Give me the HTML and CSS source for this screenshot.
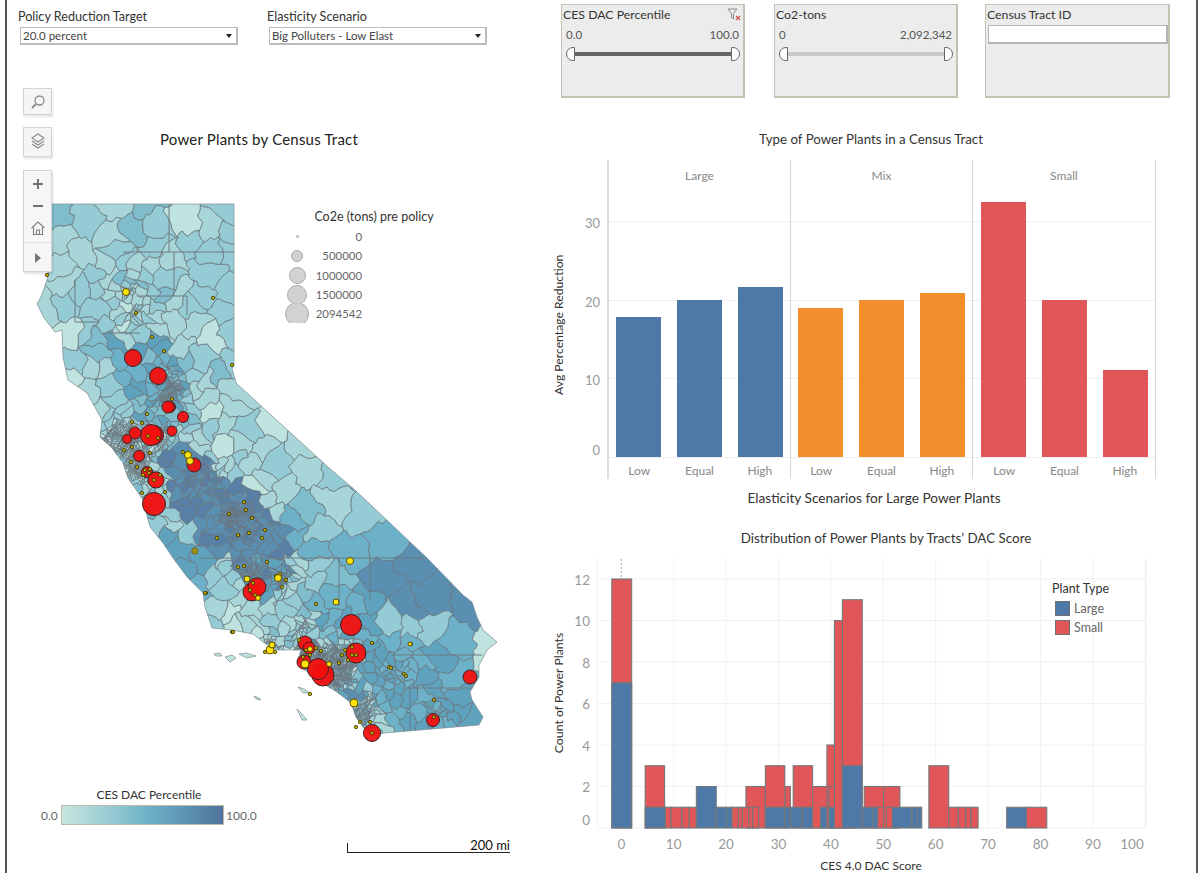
FILE: index.html
```html
<!DOCTYPE html>
<html>
<head>
    <title>Power Plants by Census Tract</title>
    <link rel="stylesheet" href="styles.css">
</head>
<body>
    <div class="dashboard">
        <div class="left-col">
            <div class="filters">
                <div class="filter filter-first">
                    <div class="filter-label">Policy Reduction Target</div>
                    <div class="dropdown"><span>20.0 percent</span><i class="arrow"></i></div>
                </div>
                <div class="filter">
                    <div class="filter-label">Elasticity Scenario</div>
                    <div class="dropdown"><span>Big Polluters - Low Elast</span><i class="arrow"></i></div>
                </div>
            </div>

            <div class="map-panel">
                <svg id="map" class="map-svg" width="533" height="813" viewBox="7 60 533 813"></svg>

                <div class="map-title">Power Plants by Census Tract</div>

                <!-- map tools -->
                <div class="map-tools">
                    <button class="tool">
                        <svg width="16" height="16" viewBox="0 0 16 16" fill="none" stroke="#8a8a8a" stroke-width="1.3"><circle cx="9.5" cy="6.5" r="4.5"/><path d="M6 10l-4 4" stroke-width="1.8"/></svg>
                    </button>
                    <button class="tool tool-layers">
                        <svg width="16" height="18" viewBox="0 0 16 18" fill="none" stroke="#8a8a8a" stroke-width="1.1"><path d="M8 1l6 4-6 4-6-4z"/><path d="M2 8l6 4 6-4"/><path d="M2 11l6 4 6-4"/></svg>
                    </button>
                    <div class="tool-group">
                        <div class="tool-cell">
                            <svg width="14" height="14" viewBox="0 0 14 14" fill="none" stroke="#707070" stroke-width="2"><path d="M7 2v10M2 7h10"/></svg>
                        </div>
                        <div class="tool-cell">
                            <svg width="14" height="14" viewBox="0 0 14 14" fill="none" stroke="#707070" stroke-width="2"><path d="M2 7h10"/></svg>
                        </div>
                        <div class="tool-cell">
                            <svg width="16" height="16" viewBox="0 0 16 16" fill="none" stroke="#808080" stroke-width="1.1"><path d="M1.5 8L8 2l6.500 6"/><path d="M3.500 7v7.500h9V7"/><path d="M6.500 14.500V10h3v4.500"/></svg>
                        </div>
                        <div class="tool-cell tool-play">
                            <svg width="10" height="12" viewBox="0 0 10 12" fill="#777"><path d="M2 1l6 5-6 5z"/></svg>
                        </div>
                    </div>
                </div>

                <!-- size legend -->
                <div class="size-legend">
                    <div class="size-title">Co2e (tons) pre policy</div>
                    <div class="size-row"><span class="dot-box"><i class="dot" style="width:3px;height:3px"></i></span><span class="size-num">0</span></div>
                    <div class="size-row"><span class="dot-box"><i class="dot" style="width:12px;height:12px"></i></span><span class="size-num">500000</span></div>
                    <div class="size-row"><span class="dot-box"><i class="dot" style="width:17px;height:17px"></i></span><span class="size-num">1000000</span></div>
                    <div class="size-row"><span class="dot-box"><i class="dot" style="width:20px;height:20px"></i></span><span class="size-num">1500000</span></div>
                    <div class="size-row"><span class="dot-box"><i class="dot" style="width:24px;height:24px"></i></span><span class="size-num">2094542</span></div>
                </div>

                <!-- colour legend -->
                <div class="color-legend">
                    <div class="color-title">CES DAC Percentile</div>
                    <div class="color-row">
                        <span class="color-min">0.0</span>
                        <div class="color-ramp"></div>
                        <span class="color-max">100.0</span>
                    </div>
                </div>

                <div class="scale-bar">200 mi</div>
            </div>
        </div>

        <div class="right-col">
            <div class="cards">
                <div class="card">
                    <div class="card-label">CES DAC Percentile</div>
                    <svg class="clear-filter" width="14" height="13" viewBox="0 0 14 13" fill="none"><path d="M1 1h9L6.500 5.500V11L4.500 9.500v-4z" stroke="#8b8b8b" stroke-width="1"/><path d="M9 8l4 4M13 8l-4 4" stroke="#d9534f" stroke-width="1.200"/></svg>
                    <div class="range-values"><span>0.0</span><span>100.0</span></div>
                    <div class="slider slider-dark"><i class="handle handle-left"></i><i class="handle handle-right"></i></div>
                </div>
                <div class="card card-middle">
                    <div class="card-label">Co2-tons</div>
                    <div class="range-values"><span>0</span><span>2,092,342</span></div>
                    <div class="slider"><i class="handle handle-left"></i><i class="handle handle-right"></i></div>
                </div>
                <div class="card card-last">
                    <div class="card-label">Census Tract ID</div>
                    <div class="text-box"></div>
                </div>
            </div>

            <div class="chart-title">Type of Power Plants in a Census Tract</div>

            <div class="bar-chart">
                <div class="y-col">
                    <div class="y-title">Avg Percentage Reduction</div>
                    <div class="y-ticks">
                        <span>30</span>
                        <span>20</span>
                        <span>10</span>
                        <span class="tick-zero">0</span>
                    </div>
                </div>
                <div class="facet facet-first">
                    <div class="facet-head">Large</div>
                    <div class="plot">
                        <div class="bar blue" style="height:140px"></div>
                        <div class="bar blue" style="height:157px"></div>
                        <div class="bar blue" style="height:170px"></div>
                    </div>
                    <div class="bar-labels"><span>Low</span><span>Equal</span><span>High</span></div>
                </div>
                <div class="facet">
                    <div class="facet-head">Mix</div>
                    <div class="plot">
                        <div class="bar orange" style="height:149px"></div>
                        <div class="bar orange" style="height:157px"></div>
                        <div class="bar orange" style="height:164px"></div>
                    </div>
                    <div class="bar-labels"><span>Low</span><span>Equal</span><span>High</span></div>
                </div>
                <div class="facet facet-last">
                    <div class="facet-head">Small</div>
                    <div class="plot">
                        <div class="bar red" style="height:255px"></div>
                        <div class="bar red" style="height:157px"></div>
                        <div class="bar red" style="height:87px"></div>
                    </div>
                    <div class="bar-labels"><span>Low</span><span>Equal</span><span>High</span></div>
                </div>
            </div>
            <div class="x-title">Elasticity Scenarios for Large Power Plants</div>

            <div class="chart-title hist-title">Distribution of Power Plants by Tracts&#8217; DAC Score</div>
            <div class="hist-chart">
                <svg id="hist" width="656" height="324" viewBox="540 549 656 324"></svg>
                <div class="hist-legend">
                    <div class="hist-legend-title">Plant Type</div>
                    <div class="hist-legend-row"><i class="swatch blue"></i>Large</div>
                    <div class="hist-legend-row"><i class="swatch red"></i>Small</div>
                </div>
            </div>
        </div>
    </div>
    <script src="charts.js"></script>
</body>
</html>
```

FILE: styles.css
```css
body {
    margin: 0;
    background: white;
    font-family: Lato, "Open Sans", sans-serif;
    color: #333;
    overflow: hidden;
}
.dashboard {
    display: grid;
    grid-template-columns: 533px 656px;
    width: 1189px;
    height: 873px;
    margin-left: 5px;
    border-left: 2px solid #555;
    border-right: 2px solid #555;
    overflow: hidden;
}

/* left side */
.filters {
    display: flex;
    height: 60px;
    padding: 8px 0 0 11px;
    box-sizing: border-box;
}
.filter {
    width: 220px;
}
.filter-first {
    margin-right: 29px;
}
.filter-label {
    font-size: 12.6px;
    line-height: 17px;
    padding-bottom: 2px;
}
.dropdown {
    display: flex;
    align-items: center;
    justify-content: space-between;
    width: 218px;
    height: 18px;
    margin-left: 2px;
    padding: 0 4px 0 2px;
    box-sizing: border-box;
    border: 1px solid #bbb;
    border-bottom: 2px solid #bbb;
    border-right: 2px solid #bbb;
    font-size: 11.5px;
    color: #444;
}
.arrow {
    width: 0;
    height: 0;
    border-left: 3.5px solid transparent;
    border-right: 3.5px solid transparent;
    border-top: 4px solid #222;
}
.map-panel {
    position: relative;
    height: 813px;
}
.map-svg {
    display: block;
}
.map-title {
    position: absolute;
    left: 153px;
    top: 69px;
    font-size: 15px;
    line-height: 20px;
    color: #222;
    letter-spacing: 0.2px;
}
.map-tools {
    position: absolute;
    left: 16px;
    top: 28px;
    width: 29px;
}
.tool {
    display: flex;
    align-items: center;
    justify-content: center;
    width: 29px;
    height: 27px;
    padding: 0;
    background: #f5f5f5;
    border: 1px solid #d4d4d4;
    box-shadow: 1px 2px 2px rgba(0, 0, 0, 0.1);
    margin-bottom: 12px;
}
.tool-layers {
    height: 30px;
    margin-bottom: 13px;
}
.tool-group {
    background: #f6f6f6;
    border: 1px solid #d4d4d4;
    box-shadow: 1px 2px 2px rgba(0, 0, 0, 0.12);
    height: 102px;
    padding-top: 2px;
    box-sizing: border-box;
}
.tool-cell {
    display: flex;
    align-items: center;
    justify-content: center;
    height: 22px;
}
.tool-play {
    height: 29px;
    border-top: 1px solid #e2e2e2;
    margin-top: 3px;
}
.size-legend {
    position: absolute;
    left: 272px;
    top: 147px;
    width: 190px;
    font-size: 12.5px;
}
.size-title {
    text-align: center;
    line-height: 20px;
}
.size-row {
    display: flex;
    align-items: center;
    height: 19.300px;
    overflow: hidden;
    color: #666;
}
.dot-box {
    display: flex;
    align-items: center;
    justify-content: center;
    width: 36px;
}
.dot {
    display: block;
    flex: none;
    border-radius: 50%;
    background: #d2d2d2;
    border: 1px solid #aaa;
    box-sizing: border-box;
}
.size-num {
    width: 47px;
    text-align: right;
    font-size: 11.4px;
}
.color-legend {
    position: absolute;
    left: 34px;
    top: 725px;
    font-size: 12px;
}
.color-title {
    text-align: center;
    line-height: 20px;
    padding-left: 10px;
    width: 196px;
}
.color-row {
    display: flex;
    align-items: center;
    color: #666;
}
.color-min {
    width: 20px;
}
.color-ramp {
    width: 163px;
    height: 20px;
    box-sizing: border-box;
    border: 1px solid #bdb9aa;
    background: linear-gradient(to right, #c6e6df, #97cbd3 30%, #6fb3c7 52%, #5b92b3 78%, #4f729a);
}
.color-max {
    padding-left: 2px;
}
.scale-bar {
    position: absolute;
    left: 340px;
    top: 783px;
    width: 162px;
    height: 9px;
    box-sizing: content-box;
    border-left: 1px solid #222;
    border-bottom: 1px solid #222;
    font-size: 13px;
    line-height: 4px;
    text-align: right;
    color: #111;
}

/* right side */
.cards {
    display: flex;
    gap: 28px;
    height: 129px;
    padding: 4px 0 0 21px;
    box-sizing: border-box;
}
.card {
    position: relative;
    width: 184px;
    height: 94px;
    box-sizing: border-box;
    background: #ececec;
    border: 1px solid #c5c2b4;
    border-right-width: 2px;
    border-bottom-width: 2px;
    padding: 0 1px;
}
.card-middle {
    margin-left: 1px;
    margin-right: -1px;
}
.card-last {
    width: 185px;
}
.card-label {
    font-size: 12.3px;
    line-height: 18px;
    margin-top: 1px;
}
.clear-filter {
    position: absolute;
    right: 2px;
    top: 3px;
}
.range-values {
    display: flex;
    justify-content: space-between;
    padding: 0 3px 0 3px;
    font-size: 11.5px;
    line-height: 16px;
    margin-top: 3px;
    color: #555;
}
.slider {
    position: relative;
    height: 4px;
    margin: 9px 6px 0 7px;
    background: #c9c9c9;
}
.slider-dark {
    background: #666;
}
.handle {
    position: absolute;
    top: -5px;
    width: 7px;
    height: 12px;
    background: white;
    border: 1px solid #666;
}
.handle-left {
    left: -4px;
    border-radius: 7px 0 0 7px;
}
.handle-right {
    right: -4px;
    border-radius: 0 7px 7px 0;
}
.text-box {
    height: 19px;
    margin-top: 1px;
    margin-left: 1px;
    width: 180px;
    box-sizing: border-box;
    background: white;
    border: 1px solid #b5b5b5;
    border-right-width: 2px;
    border-bottom-width: 2px;
}
.chart-title {
    width: 662px;
    text-align: center;
    font-size: 13.3px;
    line-height: 20px;
}
.bar-chart {
    display: flex;
    margin-top: 11px;
    height: 329px;
}
.y-col {
    display: flex;
    width: 67px;
    padding-top: 31px;
    box-sizing: border-box;
}
.y-title {
    writing-mode: vertical-rl;
    transform: rotate(180deg);
    width: 16px;
    height: 267px;
    margin-left: 11px;
    text-align: center;
    font-size: 12.2px;
    line-height: 16px;
}
.y-ticks {
    display: flex;
    flex-direction: column;
    align-items: flex-end;
    width: 33px;
    padding-top: 24px;
    gap: 62.700px;
    font-size: 13px;
    line-height: 16px;
    color: #999;
}
.y-ticks .tick-zero {
    margin-top: -9px;
}
.facet {
    width: 182px;
    height: 319px;
    box-sizing: border-box;
    border-right: 1px solid #d6d6d6;
}
.facet-first {
    width: 184px;
    border-left: 2px solid #dcdcdc;
}
.facet-last {
    width: 183px;
}
.facet-last .plot {
    padding-left: 8px;
}
.facet-last .bar-labels {
    padding-left: 1px;
}
.facet-head {
    height: 31px;
    line-height: 32px;
    text-align: center;
    font-size: 12px;
    color: #888;
}
.plot {
    display: flex;
    align-items: flex-end;
    gap: 16px;
    height: 267px;
    padding-left: 7px;
    box-sizing: border-box;
    border-bottom: 1px dotted #ddd;
    background: repeating-linear-gradient(to top, transparent 0, transparent 77.700px, #f0f0f0 77.700px, #f0f0f0 78.700px);
}
.bar {
    width: 45px;
    box-sizing: border-box;
}
.blue {
    background: #4e79a7;
}
.orange {
    background: #f28e2b;
}
.red {
    background: #e15759;
}
.bar-labels {
    display: flex;
    font-size: 12px;
    line-height: 26px;
    color: #888;
}
.bar-labels span {
    width: 61px;
    text-align: center;
}
.x-title {
    width: 668px;
    text-align: center;
    font-size: 13.7px;
    line-height: 20px;
    margin-top: -1px;
}
.hist-title {
    width: 692px;
    margin-top: 20px;
    font-size: 13.4px;
}
.hist-chart {
    position: relative;
    margin-top: 1px;
}
.hist-legend {
    position: absolute;
    left: 512px;
    top: 30px;
    font-size: 12.500px;
}
.hist-legend-title {
    line-height: 20px;
}
.hist-legend-row {
    display: flex;
    align-items: center;
    gap: 4px;
    height: 19px;
    margin-left: 3px;
    color: #666;
}
.swatch {
    display: block;
    width: 15px;
    height: 15px;
    box-sizing: border-box;
    border: 1px solid #6f6f6f;
}
```

FILE: charts.js
```js
// California map + histogram, both drawn into the svg elements from index.html
const NS = 'http://www.w3.org/2000/svg';

function seeded(a) {
    return function () {
        a = (a + 0x6D2B79F5) | 0;
        let t = Math.imul(a ^ (a >>> 15), 1 | a);
        t = (t + Math.imul(t ^ (t >>> 7), 61 | t)) ^ t;
        return ((t ^ (t >>> 14)) >>> 0) / 4294967296;
    };
}
const rand = seeded(42);

const CA = [[50,204],[234,204],[234,366],[232,368],[236,383],[328,467],[355,490],[427,558],[463,595],[472,602],[477,617],
    [483,630],[497,642],[487,650],[482,660],[479,665],[479,677],[470,692],[472,700],[483,717],[479,725],[384,733],[372,736],
    [363,727],[356,717],[351,703],[337,692],[322,683],[301,667],[298,660],[301,650],[277,650],[266,644],[253,634],[232,630],
    [212,628],[205,607],[203,593],[187,577],[173,558],[163,543],[150,527],[143,500],[128,478],[123,463],[112,448],[100,437],
    [102,420],[87,393],[68,380],[63,357],[62,330],[55,332],[44,318],[37,304],[41,297],[47,280],[52,250],[50,225]];

const ISLANDS = [[[214,654],[220,653],[222,656],[216,656]], [[225,657],[232,655],[236,658],[230,662]],
    [[239,654],[246,653],[256,656],[247,658]], [[298,687],[304,689],[310,693],[303,693]],
    [[254,696],[259,698],[261,700],[256,699]], [[297,709],[302,714],[307,720],[302,720]]];

// city clusters: x, y, smallest spacing, spread
const CITIES = [[122,440,1.300,13],[137,465,1.500,11],[150,440,2.200,12],[170,395,1.200,9],[170,372,6,8],[160,432,3,8],[232,512,2,8],
    [255,570,2.400,8],[146,478,2.500,8],[335,665,0.900,19],[310,655,1.200,9],[362,712,1.800,12],[268,646,2.400,7],[150,505,3.500,7],
    [300,632,3,6],[395,672,5,8],[127,292,2,3],[137,315,3,4],[205,480,6,18],[432,716,4,5],[280,580,2.400,6],[248,525,4,12]];

function inside(p, poly) {
    let c = false;
    for (let i = 0, j = poly.length - 1; i < poly.length; j = i++) {
        if ((poly[i][1] > p[1]) !== (poly[j][1] > p[1]) &&
            p[0] < (poly[j][0] - poly[i][0]) * (p[1] - poly[i][1]) / (poly[j][1] - poly[i][1]) + poly[i][0]) c = !c;
    }
    return c;
}

function spacing(x, y) {
    let r = 20;
    if (x > 370 && y > 555 && y < 632) r = 75;
    else if (x > 285 && y > 480) r = 44;
    else if (x > 235 && y < 520) r = 34;
    if (y < 300) r = 27;
    CITIES.forEach(function (c) {
        const d = Math.hypot(x - c[0], y - c[1]);
        r = Math.min(r, c[2] + Math.max(0, d - c[3]) * 0.45);
    });
    return r;
}

const sites = [];
function dart(p) {
    if (!inside(p, CA)) return;
    const r = spacing(p[0], p[1]) * (0.6 + rand() * 0.8);
    for (let i = 0; i < sites.length; i++) {
        if (Math.hypot(sites[i][0] - p[0], sites[i][1] - p[1]) <= r) return;
    }
    sites.push(p);
}
// dense clusters first, then the rest of the state
CITIES.forEach(function (c) {
    for (let n = 0; n < 2400; n++) {
        const a = rand() * Math.PI * 2, d = Math.sqrt(rand()) * c[3] * 1.300;
        dart([c[0] + Math.cos(a) * d, c[1] + Math.sin(a) * d]);
    }
});
for (let n = 0; n < 9000; n++) {
    dart([30 + rand() * 475, 198 + rand() * 545]);
}

function clip(cell, s, o) {
    const mx = (s[0] + o[0]) / 2, my = (s[1] + o[1]) / 2, nx = o[0] - s[0], ny = o[1] - s[1];
    const out = [];
    for (let i = 0; i < cell.length; i++) {
        const a = cell[i], b = cell[(i + 1) % cell.length];
        const da = (a[0] - mx) * nx + (a[1] - my) * ny, db = (b[0] - mx) * nx + (b[1] - my) * ny;
        if (da <= 0) out.push(a);
        if ((da < 0 && db > 0) || (da > 0 && db < 0)) {
            const t = da / (da - db);
            out.push([a[0] + (b[0] - a[0]) * t, a[1] + (b[1] - a[1]) * t]);
        }
    }
    return out;
}

function warp(x, y) {
    return [x + 3.500 * Math.sin(y * 0.13 + x * 0.05) + 2 * Math.sin(y * 0.37 + 1.3) + 1 * Math.sin(y * 0.9 + x * 0.6),
            y + 3.500 * Math.sin(x * 0.12 - y * 0.04) + 2 * Math.sin(x * 0.41 + 0.7) + 1 * Math.sin(x * 0.83 + y * 0.7)];
}

function cellPath(cell) {
    let d = '';
    for (let i = 0; i < cell.length; i++) {
        const a = cell[i], b = cell[(i + 1) % cell.length];
        const len = Math.hypot(b[0] - a[0], b[1] - a[1]);
        const k = Math.max(1, Math.round(len / 4));
        for (let j = 0; j < k; j++) {
            const w = warp(a[0] + (b[0] - a[0]) * j / k, a[1] + (b[1] - a[1]) * j / k);
            d += (d ? 'L' : 'M') + w[0].toFixed(1) + ' ' + w[1].toFixed(1);
        }
    }
    return d + 'Z';
}

const RAMP = ['#bfe3de', '#a8d6d8', '#94cbd4', '#7fbdcd', '#6db1c8', '#5fa2bd', '#5a8fb2', '#5880a6'];

// colour zones, first match wins: polygon, base index, jitter
const ZONES = [
    [[[165,442],[195,452],[225,478],[270,510],[292,558],[205,558],[178,505],[158,462]], 6.400, 0.8],
    [[[222,558],[290,558],[284,590],[245,592]], 6, 1],
    [[[372,558],[427,558],[470,600],[482,628],[432,632],[400,600],[372,600]], 6, 0.2],
    [[[350,630],[482,630],[479,730],[384,733]], 4.600, 0.8],
    [[[300,590],[372,560],[372,640],[320,640]], 4, 1.600],
    [[[236,383],[300,440],[270,478],[225,452],[205,400]], 1, 1],
    [[[300,440],[355,490],[390,525],[330,545],[290,510],[270,478]], 2.200, 0.8],
    [[[355,490],[427,558],[292,558],[290,510]], 3.800, 0.3],
    [[[150,510],[205,558],[222,600],[175,570]], 4, 1.200],
    [[[205,590],[300,650],[260,640],[212,628]], 0.600, 1],
    [[[270,640],[372,640],[372,736],[296,665]], 3, 3],
    [[[100,335],[180,335],[190,430],[150,430],[115,380]], 4, 1.300],
    [[[180,340],[240,340],[240,430],[200,430]], 1.600, 1.400],
    [[[37,280],[100,280],[100,400],[62,400]], 1.600, 1.400],
    [[[90,400],[150,420],[165,520],[130,490]], 1.400, 1.600]
];

function tone(x, y) {
    for (let i = 0; i < ZONES.length; i++) {
        if (inside([x, y], ZONES[i][0])) {
            const v = ZONES[i][1] + (rand() - 0.5) * 2 * ZONES[i][2];
            return RAMP[Math.max(0, Math.min(7, Math.round(v)))];
        }
    }
    return RAMP[Math.max(0, Math.min(7, Math.round(1.600 + (rand() - 0.5) * 2.400)))];
}

function el(parent, name, attrs, text) {
    const node = document.createElementNS(NS, name);
    for (const k in attrs) node.setAttribute(k, attrs[k]);
    if (text !== undefined) node.textContent = text;
    parent.appendChild(node);
    return node;
}

function drawMap() {
    const svg = document.getElementById('map');
    const defs = el(svg, 'defs', {});
    const cp = el(defs, 'clipPath', { id: 'ca-clip' });
    const outline = CA.map(function (p) { return p.join(','); }).join(' ');
    el(cp, 'polygon', { points: outline });

    const g = el(svg, 'g', { 'clip-path': 'url(#ca-clip)' });
    el(g, 'polygon', { points: outline, fill: RAMP[2] });
    let cells = '';
    sites.forEach(function (s) {
        let cell = [[0, 150], [560, 150], [560, 800], [0, 800]];
        const near = [];
        sites.forEach(function (o) {
            const dx = o[0] - s[0], dy = o[1] - s[1];
            if (o !== s && Math.abs(dx) < 170 && Math.abs(dy) < 170) near.push([dx * dx + dy * dy, o]);
        });
        near.sort(function (a, b) { return a[0] - b[0]; });
        for (let i = 0; i < near.length; i++) {
            let far = 0;
            cell.forEach(function (c) { far = Math.max(far, (c[0] - s[0]) * (c[0] - s[0]) + (c[1] - s[1]) * (c[1] - s[1])); });
            if (near[i][0] > far * 4) break;
            cell = clip(cell, s, near[i][1]);
        }
        cells += '<path d="' + cellPath(cell) + '" fill="' + tone(s[0], s[1]) + '"/>';
    });
    const tracts = el(g, 'g', { stroke: '#6d767c', 'stroke-width': 0.75, 'stroke-linejoin': 'round' });
    tracts.innerHTML = cells;

    // long straight county lines
    el(g, 'path', {
        d: 'M123 252H234M169 204V252M174 252V296M137 296H187V315M103 333H140M75 280V322H100M200 558H427M339 558V606M370 558V600M392 655H482M405 688H479M410 688V733',
        fill: 'none', stroke: '#6f7a80', 'stroke-width': 1
    });
    el(svg, 'polygon', { points: outline, fill: 'none', stroke: '#7f8d90', 'stroke-width': 0.7 });

    ISLANDS.forEach(function (p) {
        el(svg, 'polygon', { points: p.map(function (q) { return q.join(','); }).join(' '), fill: '#bfe3de', stroke: '#7d8a8c', 'stroke-width': 0.7 });
    });

    const reds = [[133,358,8.500],[158,376,8.500],[170,407,5.500],[168,407,6],[183,417,5.500],[172,431,5],[154,435,9.500],[151,435,10.500],
        [135,433,6],[127,439,4.500],[139,456,5.500],[194,465,7],[147,472,5.500],[156,480,8],[154,504,11.500],[252,592,9],[257,587,9],
        [351,625,10.500],[356,653,10],[305,643,7],[309,648,6],[304,662,7],[323,675,11],[318,669,10.500],[470,677,7],[433,720,6.500],[372,733,8.500]];
    reds.forEach(function (c) {
        el(svg, 'circle', { cx: c[0], cy: c[1], r: c[2], fill: '#f40f0f', 'fill-opacity': 0.94, stroke: '#3b2222', 'stroke-width': 1 });
    });

    const olive = [[164,351],[152,337],[232,365],[172,399],[147,414],[132,422],[142,423],[132,447],[124,450],[150,453],[137,467],[131,462],
        [142,493],[165,492],[154,480],[183,452],[244,502],[246,510],[229,514],[252,518],[265,530],[238,535],[249,533],[262,538],[217,538],
        [267,562],[238,567],[244,566],[276,576],[282,587],[206,593],[47,275],[136,313],[213,298],[316,604],[372,643],[389,667],[404,674],
        [205,593],[232,632],[342,655],[339,663],[352,647],[352,655],[356,655],[406,676],[391,668],[434,700],[434,717],[310,694],[360,722],
        [356,727],[370,722],[372,733],[233,632],[411,644],[299,640],[306,650],[303,657],[310,655],[316,648],[321,651],[275,652],[265,652],
        [345,650],[348,660],[160,475],[145,470],[149,473],[143,475],[150,469],[253,583],[250,590],[255,595],[280,574],[286,580],[158,438],[148,436]];
    olive.forEach(function (c) {
        el(svg, 'circle', { cx: c[0], cy: c[1], r: 1.700, fill: '#b9a500', stroke: '#3f3a00', 'stroke-width': 0.8 });
    });
    el(svg, 'circle', { cx: 195, cy: 551, r: 3.200, fill: '#9a8f10', stroke: '#6b6530', 'stroke-width': 0.8 });

    const yellows = [[126,292,3.500],[188,455,3.500],[190,461,3.500],[247,579,3],[278,578,3.500],[258,598,2.500],[350,561,3.500],[336,602,3],
        [270,650,4],[272,645,3],[305,664,4],[310,649,2.500],[410,644,2],[354,703,4],[329,664,2.500]];
    yellows.forEach(function (c) {
        el(svg, 'circle', { cx: c[0], cy: c[1], r: c[2], fill: '#ffe30a', stroke: '#4a4300', 'stroke-width': 0.9 });
    });
}

function drawHist() {
    const svg = document.getElementById('hist');
    const X0 = 621.3, PX = 5.24, Y0 = 828, UNIT = 20.75;
    const tickText = { fill: '#999', 'font-size': 13.500 };

    // gridlines
    for (let v = 0; v <= 100; v += 10) {
        if (v > 0) el(svg, 'path', { d: 'M' + (X0 + v * PX) + ' 559V828', stroke: '#f1f1f1', 'stroke-width': 1 });
    }
    for (let v = 0; v <= 12; v += 2) {
        el(svg, 'path', { d: 'M597 ' + (Y0 - v * UNIT) + 'H1146', stroke: '#f1f1f1', 'stroke-width': 1 });
    }
    el(svg, 'path', { d: 'M597 559V828M1146 559V828', stroke: '#f1f1f1', 'stroke-width': 1 });
    el(svg, 'path', { d: 'M621.300 559V579', stroke: '#aaa', 'stroke-width': 1, 'stroke-dasharray': '2 2' });

    // bars as left, right (px in the crop I measured from), height, colour
    const zx = function (v) { return 540 + v / 2.52; };
    const bars = [
        [181,231,12,'r'],[181,231,7,'b'],
        [265,314,3,'r'],[265,316,1,'b'],[316,330,1,'r'],[330,358,1,'r'],[358,376,1,'r'],[376,394,1,'r'],
        [394,444,2,'b'],[444,470,1,'b'],[470,484,1,'b'],[484,500,1,'r'],[500,510,1,'r'],
        [519,568,2,'r'],[510,526,1,'r'],[526,536,1,'r'],[536,551,1,'r'],
        [617,631,2,'r'],[568,617,3,'r'],[568,617,1,'b'],[617,631,1,'b'],[638,687,3,'r'],[631,661,1,'b'],[661,707,1,'b'],
        [687,728,2,'r'],[707,728,1,'b'],[723,773,4,'r'],[728,752,2,'r'],[728,752,1,'b'],[752,762,1,'b'],
        [742,791,10,'r'],[762,812,11,'r'],[762,812,3,'b'],
        [817,866,2,'r'],[812,840,1,'b'],[840,851,1,'b'],[851,866,1,'r'],[866,907,2,'r'],[873,888,1,'r'],
        [888,937,1,'b'],[937,951,1,'b'],[951,962,1,'b'],[980,1030,3,'r'],[1030,1054,1,'r'],[1054,1073,1,'r'],[1073,1086,1,'r'],[1086,1104,1,'r'],
        [1176,1226,1,'b'],[1226,1277,1,'r']
    ];
    bars.forEach(function (b) {
        const x = zx(b[0]), w = zx(b[1]) - x, h = b[2] * UNIT;
        el(svg, 'rect', {
            x: x, y: Y0 - h, width: w, height: h,
            fill: b[3] === 'r' ? '#e15759' : '#4e79a7',
            stroke: '#76777a', 'stroke-width': 1.100
        });
    });

    // axis text
    [[12,585],[10,626],[8,668],[6,709],[4,751],[2,792],[0,825]].forEach(function (t) {
        el(svg, 'text', Object.assign({ x: 590, y: t[1], 'text-anchor': 'end' }, tickText), t[0]);
    });
    for (let v = 0; v <= 100; v += 10) {
        const x = v === 100 ? 1132 : X0 + v * PX;
        el(svg, 'text', Object.assign({ x: x, y: 849, 'text-anchor': 'middle' }, tickText), v);
    }
    el(svg, 'text', { x: 871, y: 870, 'text-anchor': 'middle', fill: '#333', 'font-size': 12 }, 'CES 4.0 DAC Score');
    el(svg, 'text', { x: 563, y: 693, 'text-anchor': 'middle', fill: '#333', 'font-size': 12.300, transform: 'rotate(-90 563 693)' }, 'Count of Power Plants');
}

drawMap();
drawHist();
```
